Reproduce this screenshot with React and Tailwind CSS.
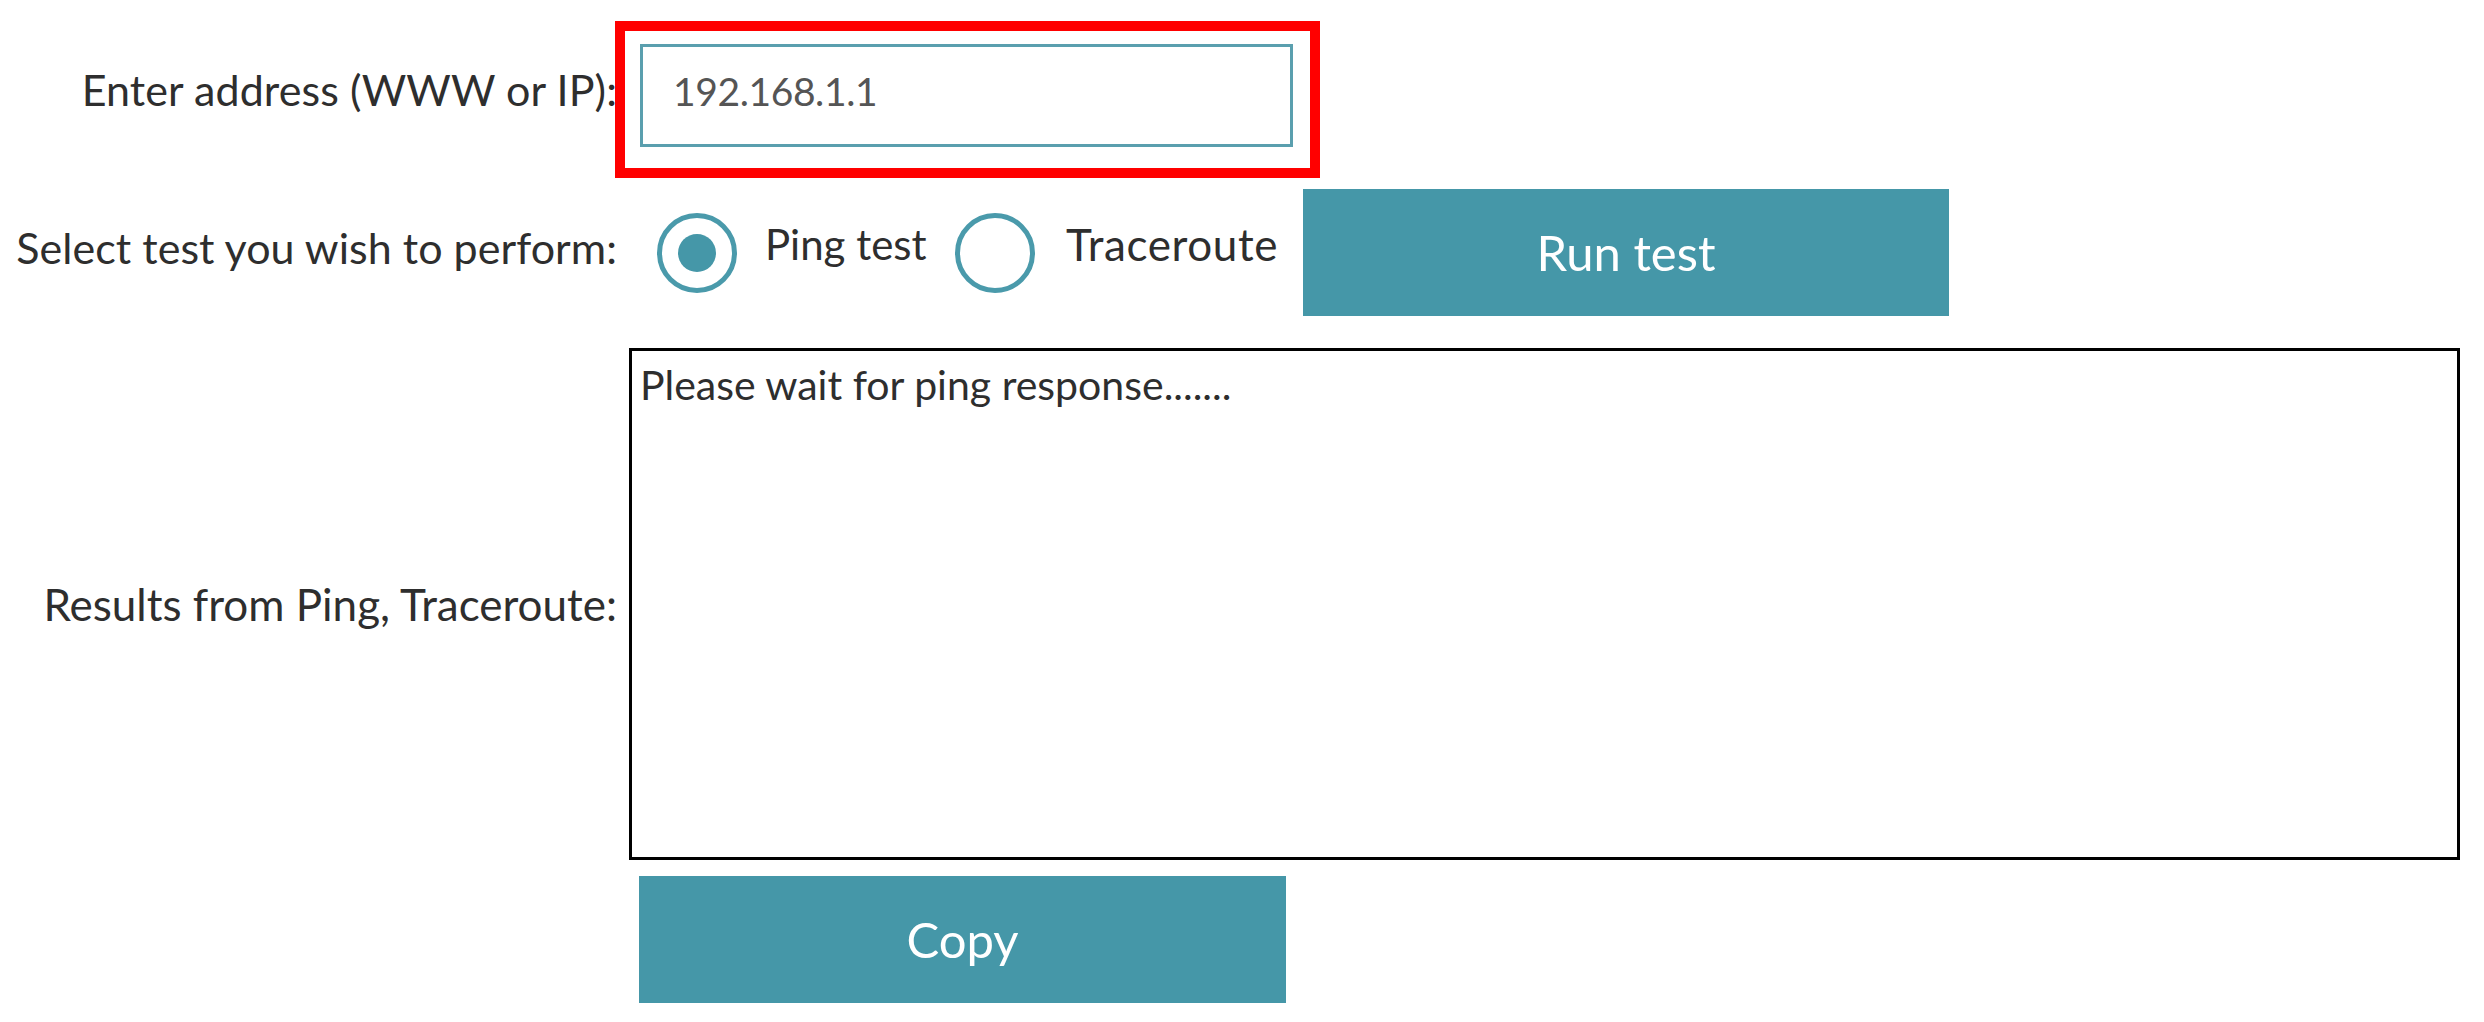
import { useState } from "react";

const Radio = ({ checked, onClick }) => (
  <button
    type="button"
    onClick={onClick}
    className="w-[80px] h-[80px] shrink-0 rounded-full border-[5px] border-[#4a9aab] bg-white flex items-center justify-center"
  >
    {checked && <span className="block w-[38px] h-[38px] rounded-full bg-[#4597a8]" />}
  </button>
);

const App = () => {
  const [test, setTest] = useState("ping");

  return (
    <div className="w-[2484px] h-[1022px] bg-white text-[#2e2e2e] font-['Lato',sans-serif] overflow-hidden">
      {/* address row */}
      <div className="flex items-start pt-[21px]">
        <div className="w-[617px] shrink-0 text-right text-[43px] tracking-[0.1px] leading-none pt-[47px]">
          Enter address (WWW or IP):
        </div>
        <div className="ml-[-2px] border-[10px] border-[#ff0000] pl-[15px] pr-[17px] pt-[13px] pb-[21px]">
          <div className="w-[653px] h-[103px] border-[3px] border-[#5a9fae] flex items-center pl-[30px] pb-[8px] text-[39px] tracking-[-0.4px] text-[#555555]">
            192.168.1.1
          </div>
        </div>
      </div>

      {/* test selection row */}
      <div className="flex items-center mt-[11px] h-[127px]">
        <div className="w-[617px] shrink-0 text-right text-[43px] tracking-[0.05px] leading-none pb-[11px]">
          Select test you wish to perform:
        </div>
        <div className="ml-[40px] flex items-center w-[298px] shrink-0">
          <Radio checked={test === "ping"} onClick={() => setTest("ping")} />
          <span className="ml-[28px] text-[42px] leading-none pb-[17px]">Ping test</span>
        </div>
        <div className="flex items-center w-[348px] shrink-0">
          <Radio checked={test === "trace"} onClick={() => setTest("trace")} />
          <span className="ml-[31px] text-[44px] tracking-[0.6px] leading-none pb-[17px]">Traceroute</span>
        </div>
        <button
          type="button"
          className="w-[646px] h-[127px] bg-[#4597a8] text-white text-[49px] leading-none"
        >
          Run test
        </button>
      </div>

      {/* results row */}
      <div className="flex items-center mt-[32px]">
        <div className="w-[617px] shrink-0 text-right text-[44px] leading-none">
          Results from Ping, Traceroute:
        </div>
        <div className="ml-[12px] w-[1831px] h-[512px] border-[3px] border-black px-[8px] pt-[8px] text-[41px] leading-tight text-[#2e2e2e]">
          Please wait for ping response.......
        </div>
      </div>

      <div className="pl-[639px] mt-[16px]">
        <button
          type="button"
          className="w-[647px] h-[127px] bg-[#4597a8] text-white text-[49px] leading-none"
        >
          Copy
        </button>
      </div>
    </div>
  );
};

export default App;
